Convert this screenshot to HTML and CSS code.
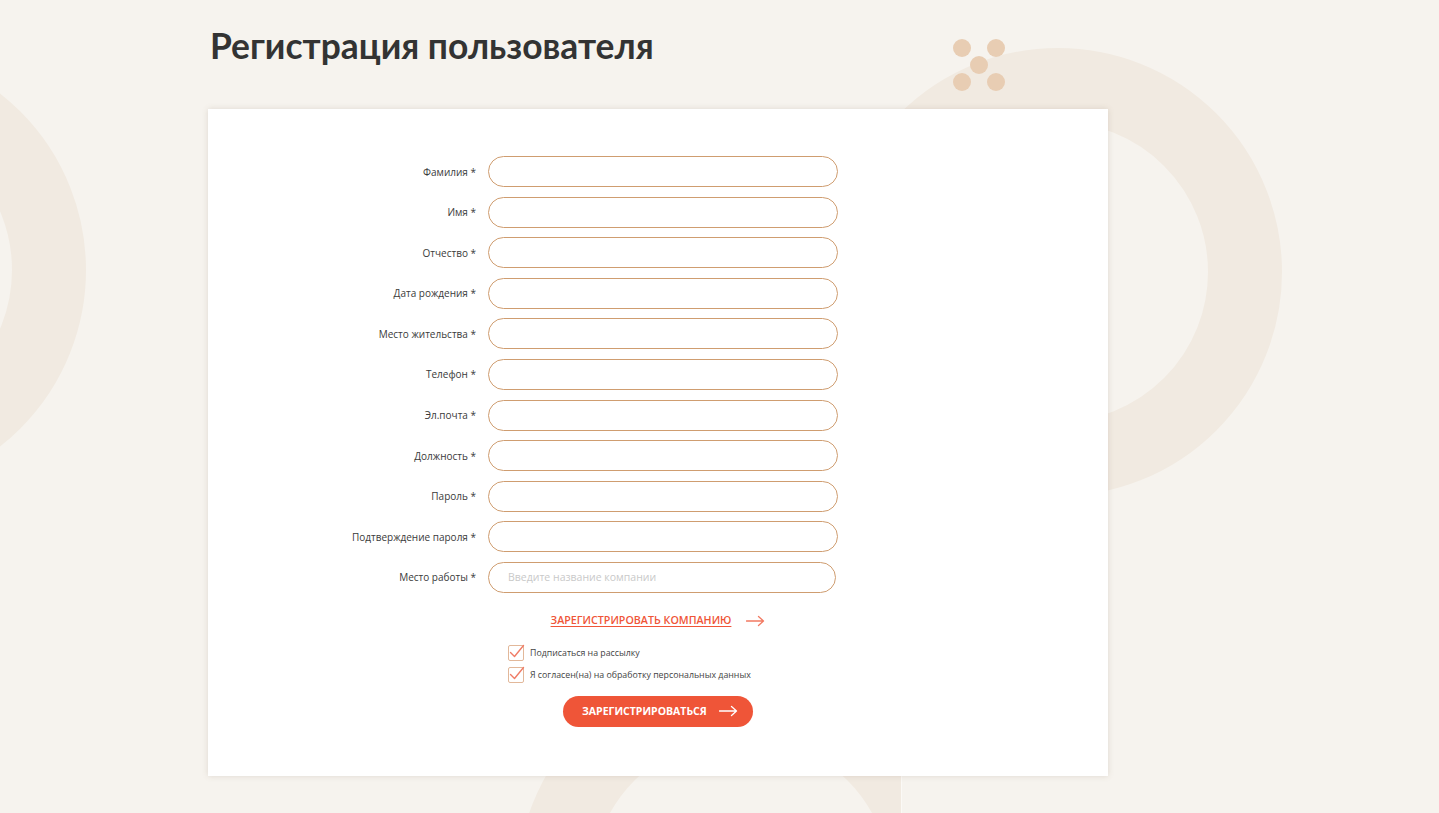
FILE: index.html
```html
<!DOCTYPE html>
<html lang="ru">
<head>
    <meta charset="UTF-8">
    <meta name="viewport" content="width=device-width, initial-scale=1.0">
    <title>Регистрация пользователя</title>
    <link rel="stylesheet" href="styles.css">
</head>
<body>
    <div class="decor">
        <div class="ring ring-left"></div>
        <div class="ring ring-right"></div>
        <div class="bottom-clip">
            <div class="ring ring-bottom"></div>
        </div>
        <div class="dots">
            <span class="dot d1"></span>
            <span class="dot d2"></span>
            <span class="dot d3"></span>
            <span class="dot d4"></span>
            <span class="dot d5"></span>
        </div>
    </div>

    <div class="page">
        <h1 class="title">Регистрация пользователя</h1>

        <div class="card">
            <form class="form" onsubmit="return false">
                <div class="row">
                    <label class="label">Фамилия *</label>
                    <input class="field" type="text">
                </div>
                <div class="row">
                    <label class="label">Имя *</label>
                    <input class="field" type="text">
                </div>
                <div class="row">
                    <label class="label">Отчество *</label>
                    <input class="field" type="text">
                </div>
                <div class="row">
                    <label class="label">Дата рождения *</label>
                    <input class="field" type="text">
                </div>
                <div class="row">
                    <label class="label">Место жительства *</label>
                    <input class="field" type="text">
                </div>
                <div class="row">
                    <label class="label">Телефон *</label>
                    <input class="field" type="text">
                </div>
                <div class="row">
                    <label class="label">Эл.почта *</label>
                    <input class="field" type="text">
                </div>
                <div class="row">
                    <label class="label">Должность *</label>
                    <input class="field" type="text">
                </div>
                <div class="row">
                    <label class="label">Пароль *</label>
                    <input class="field" type="password">
                </div>
                <div class="row">
                    <label class="label">Подтверждение пароля *</label>
                    <input class="field" type="password">
                </div>
                <div class="row">
                    <label class="label">Место работы *</label>
                    <input class="field field-company" type="text" placeholder="Введите название компании">
                </div>

                <div class="company-link-wrap">
                    <a href="#" class="company-link">Зарегистрировать компанию</a>
                    <svg class="arrow arrow-link" width="19" height="12" viewBox="0 0 19 12">
                        <path d="M0.5 6H17.5M12.5 1.5L17.5 6L12.5 10.5" fill="none" stroke="#f27a62" stroke-width="1.3" stroke-linecap="round" stroke-linejoin="round"/>
                    </svg>
                </div>

                <div class="checks">
                    <label class="check">
                        <span class="box">
                            <svg width="20" height="18" viewBox="0 0 20 18">
                                <path d="M3.5 9.5L7.5 13.5L16.5 2.5" fill="none" stroke="#f07c66" stroke-width="1.4" stroke-linecap="round" stroke-linejoin="round"/>
                            </svg>
                        </span>
                        Подписаться на рассылку
                    </label>
                    <label class="check">
                        <span class="box">
                            <svg width="20" height="18" viewBox="0 0 20 18">
                                <path d="M3.5 9.5L7.5 13.5L16.5 2.5" fill="none" stroke="#f07c66" stroke-width="1.4" stroke-linecap="round" stroke-linejoin="round"/>
                            </svg>
                        </span>
                        Я согласен(на) на обработку персональных данных
                    </label>
                </div>

                <div class="submit-wrap">
                    <button class="submit" type="submit">
                        Зарегистрироваться
                        <svg class="arrow" width="19" height="12" viewBox="0 0 19 12">
                            <path d="M0.5 6H17.5M12.5 1.5L17.5 6L12.5 10.5" fill="none" stroke="#fff" stroke-width="1.3" stroke-linecap="round" stroke-linejoin="round"/>
                        </svg>
                    </button>
                </div>
            </form>
        </div>
    </div>
</body>
</html>
```

FILE: styles.css
```css
html, body {
    margin: 0;
    padding: 0;
}
body {
    font-family: "Open Sans", Arial, sans-serif;
    background-color: #f6f3ee;
    color: #333;
    min-height: 813px;
    position: relative;
    overflow: hidden;
}
.decor {
    position: absolute;
    top: 0;
    left: 0;
    width: 100%;
    height: 813px;
    pointer-events: none;
}
.ring {
    position: absolute;
    width: 300px;
    height: 300px;
    border: 74px solid #f1eae1;
    border-radius: 50%;
}
.ring-left {
    left: -362px;
    top: 46px;
}
.ring-right {
    left: 834px;
    top: 48px;
}
.bottom-clip {
    position: absolute;
    left: 0;
    top: 600px;
    width: 901px;
    height: 213px;
    overflow: hidden;
    border-right: 1px solid #fbf9f6;
}
.ring-bottom {
    left: 517px;
    top: 62px;
}
.dots {
    position: absolute;
    left: 953px;
    top: 39px;
    width: 52px;
    height: 52px;
}
.dot {
    position: absolute;
    width: 18px;
    height: 18px;
    border-radius: 50%;
    background-color: #e8cdb3;
}
.d1 { left: 0; top: 0; }
.d2 { left: 34px; top: 0; }
.d3 { left: 17px; top: 17px; }
.d4 { left: 0; top: 34px; }
.d5 { left: 34px; top: 34px; }

.page {
    position: relative;
    width: 1023px;
    margin: 0 auto;
    padding-top: 23px;
}
.title {
    margin: 0 0 0 2px;
    font-family: Lato, "Open Sans", sans-serif;
    font-weight: 700;
    font-size: 35.4px;
    line-height: 46px;
    color: #333;
}
.card {
    width: 900px;
    margin-top: 40px;
    background-color: #fff;
    box-shadow: 0 0 6px rgba(120, 100, 80, 0.18);
    padding: 47px 0 49px;
    box-sizing: border-box;
}
.form {
    display: flex;
    flex-direction: column;
}
.row {
    display: grid;
    grid-template-columns: 268px 350px;
    column-gap: 12px;
    align-items: center;
    margin-bottom: 9.6px;
}
.label {
    text-align: right;
    font-size: 10px;
    color: #3a3a3a;
}
.field {
    height: 31px;
    box-sizing: border-box;
    border: 1px solid #cf9d70;
    border-radius: 16px;
    background: #fff;
    padding: 0 19px;
    font-family: "Open Sans", Arial, sans-serif;
    font-size: 10.5px;
    color: #333;
    outline: none;
}
.field-company {
    width: 348px;
}
.field::placeholder {
    color: #c9c9c9;
}
.company-link-wrap {
    display: flex;
    justify-content: center;
    align-items: center;
    gap: 15px;
    height: 34px;
}
.company-link {
    font-size: 10.7px;
    font-weight: 600;
    text-transform: uppercase;
    color: #ef5538;
    text-decoration: underline;
    text-underline-offset: 2px;
}
.arrow-link {
    margin-top: 2px;
}
.checks {
    display: flex;
    flex-direction: column;
    gap: 6px;
    padding-left: 300px;
    margin-top: 8px;
}
.check {
    display: flex;
    align-items: center;
    gap: 6px;
    font-size: 8.8px;
    color: #444;
    height: 16px;
}
.box {
    position: relative;
    width: 16px;
    height: 16px;
    box-sizing: border-box;
    border: 1px solid #e2b89a;
    border-radius: 2px;
    flex-shrink: 0;
}
.box svg {
    position: absolute;
    left: -2px;
    top: -3px;
}
.submit-wrap {
    display: flex;
    justify-content: center;
    margin-top: 13px;
}
.submit {
    display: flex;
    align-items: center;
    gap: 12px;
    width: 190px;
    height: 31px;
    padding: 0 0 0 19px;
    border: none;
    border-radius: 16px;
    background-color: #ef5538;
    color: #fff;
    font-family: "Open Sans", Arial, sans-serif;
    font-size: 10.5px;
    font-weight: 700;
    text-transform: uppercase;
    cursor: pointer;
}
```
